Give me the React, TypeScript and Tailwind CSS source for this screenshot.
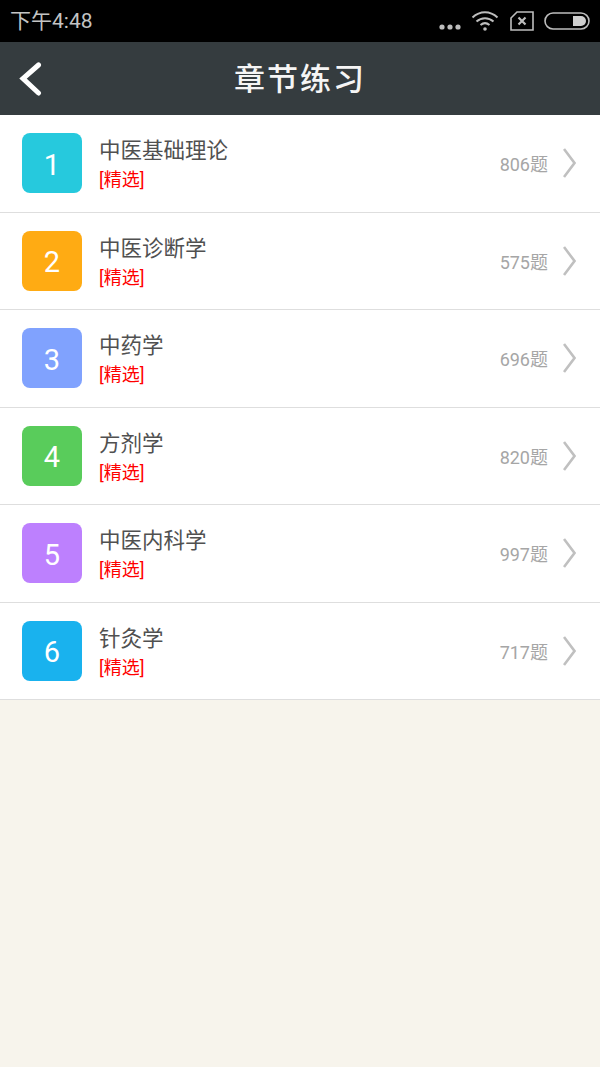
const font = { fontFamily: 'Roboto, "Noto Sans CJK SC", sans-serif' };
const rows = [
  { n: 1, t: '中医基础理论', c: '806题', bg: 'bg-[#26c9dd]' },
  { n: 2, t: '中医诊断学', c: '575题', bg: 'bg-[#ffab13]' },
  { n: 3, t: '中药学', c: '696题', bg: 'bg-[#80a2fe]' },
  { n: 4, t: '方剂学', c: '820题', bg: 'bg-[#59cc5b]' },
  { n: 5, t: '中医内科学', c: '997题', bg: 'bg-[#bd80fe]' },
  { n: 6, t: '针灸学', c: '717题', bg: 'bg-[#19b2ee]' },
];

export default function App() {
  return (
    <div style={font} className="w-[600px] h-[1067px] flex flex-col bg-[#f7f4ec] overflow-hidden">
      <div className="h-[42px] bg-black flex items-center pl-[10px] pr-[10px] text-[#c4c4c4]">
        <span className="text-[21px] leading-none">下午4:48</span>
        <div className="ml-auto flex items-center">
          <svg width="22" height="6" viewBox="0 0 22 6" className="mr-[10px] mt-[12px]" fill="#bdbdbd">
            <circle cx="3" cy="3" r="2.6" /><circle cx="11" cy="3" r="2.6" /><circle cx="19" cy="3" r="2.6" />
          </svg>
          <svg width="28" height="20" viewBox="0 0 28 20" className="mr-[11px]" fill="none" stroke="#bdbdbd" strokeWidth="2">
            <path d="M1.5 6.5C9 -0.5 19 -0.5 26.5 6.5" />
            <path d="M5.5 10.5C10.5 6 17.5 6 22.5 10.5" />
            <path d="M9.5 14C12.5 11.5 15.5 11.5 18.5 14" />
            <circle cx="14" cy="18" r="1.8" fill="#bdbdbd" stroke="none" />
          </svg>
          <svg width="24" height="20" viewBox="0 0 24 20" className="mr-[10px]" fill="none" stroke="#bdbdbd">
            <path d="M7 1H23V19H1V7Z" strokeWidth="1.6" />
            <path d="M8.5 6.5L15.5 13.5M15.5 6.5L8.5 13.5" strokeWidth="2.2" />
          </svg>
          <svg width="46" height="18" viewBox="0 0 46 18" fill="none">
            <rect x="1" y="1" width="44" height="16" rx="8" stroke="#bdbdbd" strokeWidth="1.6" />
            <path d="M29 4H37A5 5 0 0 1 37 14H29Z" fill="#cfcfcf" />
          </svg>
        </div>
      </div>
      <div className="h-[73px] bg-[#353c3f] relative flex items-center justify-center">
        <svg width="24" height="36" viewBox="0 0 24 36" className="absolute left-[18px] top-[19px]" fill="none" stroke="#fff" strokeWidth="5" strokeLinecap="round">
          <path d="M20.5 4L5 17.5L20.5 32" />
        </svg>
        <span className="text-[31px] font-medium text-[#f5f5f5] tracking-[2px] leading-none translate-y-[1px]">章节练习</span>
      </div>
      <div className="bg-white flex flex-col">
        {rows.map((r) => (
          <div key={r.n} className="h-[97.5px] border-b border-[#dedede] flex items-center pl-[22px] pr-[24px]">
            <div className={`w-[60px] h-[60px] rounded-[8px] ${r.bg} flex items-center justify-center text-white text-[29px] pt-[4px]`}>{r.n}</div>
            <div className="ml-[17px] flex flex-col pt-[3px]">
              <span className="text-[21.5px] leading-[28px] text-[#505050]">{r.t}</span>
              <span className="text-[18px] leading-[24px] mt-[3px] text-[#ff0000]">[精选]</span>
            </div>
            <span className="ml-auto text-[18px] text-[#a6a6a6] pt-[3px]">{r.c}</span>
            <svg width="13" height="30" viewBox="0 0 13 30" className="ml-[15px]" fill="none" stroke="#c0c0c0" strokeWidth="2.6">
              <path d="M1 1L11.5 15L1 29" />
            </svg>
          </div>
        ))}
      </div>
    </div>
  );
}
